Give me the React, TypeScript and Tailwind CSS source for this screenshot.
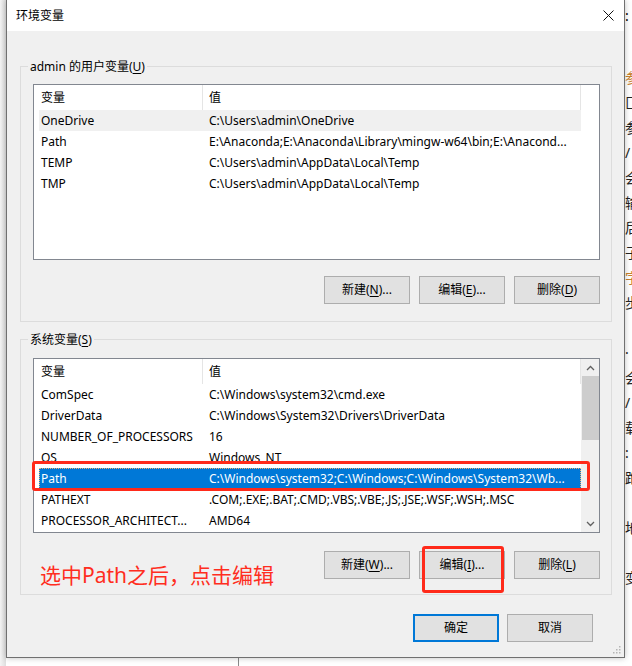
import React from 'react';

const FONT = "font-['Noto_Sans','Noto_Sans_CJK_SC',sans-serif]";

type Row = { name: string; value: string };

const userRows: Row[] = [
  { name: 'OneDrive', value: 'C:\\Users\\admin\\OneDrive' },
  { name: 'Path', value: 'E:\\Anaconda;E:\\Anaconda\\Library\\mingw-w64\\bin;E:\\Anacond...' },
  { name: 'TEMP', value: 'C:\\Users\\admin\\AppData\\Local\\Temp' },
  { name: 'TMP', value: 'C:\\Users\\admin\\AppData\\Local\\Temp' },
];

const systemRows: Row[] = [
  { name: 'ComSpec', value: 'C:\\Windows\\system32\\cmd.exe' },
  { name: 'DriverData', value: 'C:\\Windows\\System32\\Drivers\\DriverData' },
  { name: 'NUMBER_OF_PROCESSORS', value: '16' },
  { name: 'OS', value: 'Windows_NT' },
  { name: 'Path', value: 'C:\\Windows\\system32;C:\\Windows;C:\\Windows\\System32\\Wb...' },
  { name: 'PATHEXT', value: '.COM;.EXE;.BAT;.CMD;.VBS;.VBE;.JS;.JSE;.WSF;.WSH;.MSC' },
  { name: 'PROCESSOR_ARCHITECT...', value: 'AMD64' },
];

// background page that peeks out on the right of the dialog
const sideChars = [
  { c: '参', cls: 'text-[#c8802e]' },
  { c: '匚', cls: '' },
  { c: '参', cls: '' },
  { c: '/', cls: '' },
  { c: '会', cls: '' },
  { c: '输', cls: '' },
  { c: '后', cls: '' },
  { c: '子', cls: '' },
  { c: '字', cls: 'text-[#c8802e]' },
  { c: '步', cls: '' },
  { c: '', cls: '' },
  { c: '·', cls: '' },
  { c: '会', cls: '' },
  { c: '/', cls: '' },
  { c: '载', cls: '' },
  { c: ':', cls: '' },
  { c: '跑', cls: '' },
  { c: '', cls: '' },
  { c: '地', cls: '' },
  { c: '', cls: '' },
  { c: '变', cls: '' },
];

const Key = ({ k }: { k: string }) => <span className="underline underline-offset-[2px]">{k}</span>;

const Btn = ({ label, k, dots, primary }: { label: string; k?: string; dots?: boolean; primary?: boolean }) => (
  <div
    className={
      'h-[28px] w-[86px] flex items-center justify-center bg-[#e1e1e1] text-[12px] text-black ' +
      (primary ? 'border-2 border-[#0078d7]' : 'border border-[#adadad]')
    }
  >
    {label}
    {k && (
      <>
        (<Key k={k} />)
      </>
    )}
    {dots && '...'}
  </div>
);

const Chevron = ({ down }: { down?: boolean }) => (
  <svg width="9" height="6" viewBox="0 0 9 6" className={down ? 'rotate-180' : ''}>
    <path d="M1 5 L4.5 1.5 L8 5" fill="none" stroke="#606060" strokeWidth="1.3" />
  </svg>
);

const ListView = ({
  rows,
  heightCls,
  hoverIndex,
  selectedIndex,
  scrollbar,
}: {
  rows: Row[];
  heightCls: string;
  hoverIndex?: number;
  selectedIndex?: number;
  scrollbar?: boolean;
}) => (
  <div className={'w-[567px] border border-[#828790] bg-white flex overflow-hidden ' + heightCls}>
    <div className="pl-[5px] w-[547px] flex flex-col">
      <div className="h-[25px] flex items-center text-[12px]">
        <div className="w-[164px] h-full flex items-center pl-[2px] border-r border-[#e5e5e5]">变量</div>
        <div className="w-[378px] h-full flex items-center pl-[6px] border-r border-[#e5e5e5]">值</div>
      </div>
      {rows.map((r, i) => {
        const sel = i === selectedIndex;
        const hov = i === hoverIndex;
        return (
          <div
            key={i}
            className={
              'h-[21px] flex items-center text-[12px] whitespace-nowrap ' +
              (sel
                ? 'bg-[#0078d7] text-white outline outline-1 outline-dotted outline-[#f5b46e] -outline-offset-1'
                : hov
                  ? 'bg-[#f0f0f0] text-black'
                  : 'text-black')
            }
          >
            <div className="w-[163px] pl-[2px] overflow-hidden">{r.name}</div>
            <div className="w-[379px] pl-[7px] overflow-hidden">{r.value}</div>
          </div>
        );
      })}
    </div>
    {scrollbar && (
      <div className="w-[18px] pl-[1px] flex flex-col bg-[#f0f0f0]">
        <div className="h-[17px] flex items-center justify-center">
          <Chevron />
        </div>
        <div className="h-[64px] bg-[#cdcdcd]" />
        <div className="flex-1" />
        <div className="h-[17px] flex items-center justify-center">
          <Chevron down />
        </div>
      </div>
    )}
  </div>
);

const GroupBox = ({ title, children, cls }: { title: React.ReactNode; children: React.ReactNode; cls: string }) => (
  <div className={'relative ml-[13px] w-[592px] border border-[#dcdcdc] pl-[12px] pr-[11px] ' + cls}>
    <div className="absolute -top-[9px] left-[7px] px-[2px] bg-[#f0f0f0] text-[12px] leading-[17px] text-black">
      {title}
    </div>
    {children}
  </div>
);

export default function App() {
  return (
    <div className={'w-[632px] h-[666px] overflow-hidden bg-white flex ' + FONT}>
      <div className="w-[6px] bg-gradient-to-r from-[#f4f4f4] to-[#dedede]" />

      <div className="w-[619px] flex flex-col">
        <div className="relative h-[658px] flex flex-col border-x border-b border-[#707070] bg-[#f0f0f0] shadow-[0_0_6px_rgba(0,0,0,0.25)]">
          {/* title bar */}
          <div className="h-[31px] bg-white flex items-center justify-between pl-[9px] pr-[10px]">
            <span className="text-[12px] text-black">环境变量</span>
            <svg width="11" height="11" viewBox="0 0 11 11">
              <path d="M0.5 0.5 L10.5 10.5 M10.5 0.5 L0.5 10.5" stroke="#111" strokeWidth="1" />
            </svg>
          </div>

          <GroupBox
            cls="mt-[35px] pt-[17px] pb-[17px]"
            title={
              <>
                admin 的用户变量(<Key k="U" />)
              </>
            }
          >
            <ListView rows={userRows} heightCls="h-[176px]" hoverIndex={0} />
            <div className="mt-[16px] flex justify-end gap-[9px]">
              <Btn label="新建" k="N" dots />
              <Btn label="编辑" k="E" dots />
              <Btn label="删除" k="D" />
            </div>
          </GroupBox>

          <GroupBox
            cls="mt-[17px] pt-[18px] pb-[15px]"
            title={
              <>
                系统变量(<Key k="S" />)
              </>
            }
          >
            <div className="relative">
              <ListView rows={systemRows} heightCls="h-[175px]" selectedIndex={4} scrollbar />
              <div className="absolute left-[-1px] top-[103px] w-[558px] h-[30px] border-[3px] border-[#ff2a1a] rounded-[3px]" />
            </div>
            <div className="mt-[18px] h-[28px] flex items-end justify-between">
              <span className="pl-[7px] -mb-[7px] text-[21px] leading-[21px] text-[#ff2d20]">
                选中Path之后，点击编辑
              </span>
              <div className="flex gap-[9px]">
                <Btn label="新建" k="W" dots />
                <div className="relative">
                  <Btn label="编辑" k="I" dots />
                  <div className="absolute -top-[5px] left-[3px] w-[82px] h-[47px] border-[3px] border-[#ff2a1a] rounded-[3px]" />
                </div>
                <Btn label="删除" k="L" />
              </div>
            </div>
          </GroupBox>

          <div className="mt-[19px] flex justify-end gap-[8px] pr-[31px]">
            <Btn label="确定" primary />
            <Btn label="取消" />
          </div>

          {/* resize grip */}
          <svg width="10" height="10" viewBox="0 0 10 10" className="absolute right-[3px] bottom-[3px]">
            {[
              [8, 2],
              [8, 5],
              [5, 5],
              [8, 8],
              [5, 8],
              [2, 8],
            ].map(([x, y], i) => (
              <rect key={i} x={x} y={y} width="1.5" height="1.5" fill="#b5b5b5" />
            ))}
          </svg>
        </div>
        <div className="flex-1 flex">
          <div className="ml-[232px] w-px bg-[#8a8a8a]" />
        </div>
      </div>

      <div className="flex-1 overflow-hidden bg-white">
        <div className="h-[31px] flex items-center text-[14px] text-black">:</div>
        <div className="h-[34px]" />
        <div className="flex flex-col w-[20px]">
          {sideChars.map((s, i) => (
            <div key={i} className={'h-[25px] leading-[25px] text-[14px] text-[#222] ' + s.cls}>
              {s.c}
            </div>
          ))}
        </div>
      </div>
    </div>
  );
}
